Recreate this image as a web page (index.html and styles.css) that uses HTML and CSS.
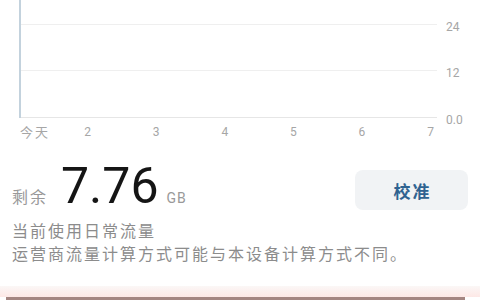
FILE: index.html
```html
<!DOCTYPE html>
<html lang="zh-CN">
<head>
<meta charset="utf-8">
<link rel="stylesheet" href="styles.css">
</head>
<body>
<div class="chart">
  <div class="plot">
    <div class="row r1"></div>
    <div class="row r2"></div>
    <div class="row r3"></div>
    <div class="bar"></div>
  </div>
  <div class="yaxis">
    <div class="yrow r1"><span>24</span></div>
    <div class="yrow r2"><span>12</span></div>
    <div class="yrow r3"><span>0.0</span></div>
  </div>
</div>
<div class="xaxis">
  <span class="xl first">今天</span>
  <span class="xl">2</span>
  <span class="xl">3</span>
  <span class="xl">4</span>
  <span class="xl">5</span>
  <span class="xl">6</span>
  <span class="xl">7</span>
</div>
<div class="info">
  <div class="remain">
    <span class="label">剩余</span>
    <span class="value">7.76</span>
    <span class="unit">GB</span>
  </div>
  <button class="calib">校准</button>
</div>
<div class="notes">
  <p>当前使用日常流量</p>
  <p>运营商流量计算方式可能与本设备计算方式不同。</p>
</div>
<div class="band"></div>
<div class="edge"></div>
</body>
</html>
```
FILE: styles.css
```css
* { box-sizing: border-box; }
html, body { margin: 0; padding: 0; background: #fff; overflow: hidden; }
body {
  width: 480px; height: 300px;
  font-family: "Noto Sans CJK SC", "Noto Sans", sans-serif;
  color: #8c8c8c;
}
.chart { display: flex; padding-left: 19px; }
.plot { position: relative; width: 418px; display: flex; flex-direction: column; }
.row { border-bottom: 1px solid #efefef; }
.r1 { height: 25px; }
.r2 { height: 46px; }
.r3 { height: 47px; }
.plot .r3 { border-bottom-color: #e6e6e6; }
.bar { position: absolute; left: 0; top: 0; width: 2px; height: 118px; background: #c3d2dd; }
.yaxis { display: flex; flex-direction: column; margin-left: 9px; }
.yrow { display: flex; align-items: flex-end; }
.yrow span {
  font-family: Roboto, "Liberation Sans", sans-serif;
  font-size: 12px; line-height: 12px; color: #a6a6a6;
  margin-bottom: -8px;
}
.xaxis { display: flex; padding-left: 19px; margin-top: 7px; }
.xl {
  width: 68.6px; text-align: center;
  font-family: Roboto, "Noto Sans CJK SC", sans-serif;
  font-size: 12px; line-height: 14px; color: #a6a6a6;
}
.xl.first {
  width: 34.3px; text-align: left; padding-left: 1px;
  font-family: "Noto Sans CJK SC", sans-serif; font-size: 13px; letter-spacing: 2px;
}
.info {
  display: flex; justify-content: space-between; align-items: flex-end;
  padding: 0 12px; margin-top: 22px; height: 50px;
}
.remain { display: flex; align-items: baseline; }
.label { font-size: 16px; letter-spacing: 2px; color: #999; }
.value {
  font-family: Roboto, "Liberation Sans", sans-serif;
  font-size: 50px; line-height: 50px; color: #151515;
  margin-left: 13px;
}
.unit {
  font-family: Roboto, "Liberation Sans", sans-serif;
  font-size: 14px; letter-spacing: 1px; color: #999; margin-left: 8px;
}
.calib {
  width: 113px; height: 40px; margin-bottom: 1px;
  border: none; border-radius: 8px; background: #f1f3f5;
  font-family: "Noto Sans CJK SC", sans-serif;
  font-size: 17px; font-weight: bold; letter-spacing: 2px; color: #2f6290;
  padding: 0 0 0 2px;
}
.notes { padding: 0 12px; margin-top: 8px; }
.notes p { margin: 0; font-size: 16px; line-height: 23px; letter-spacing: 2px; color: #8c8c8c; white-space: nowrap; }
.band { margin-top: 21px; height: 11px; background: linear-gradient(#fbf7f6, #fde8e6); }
.edge { height: 3px; margin: 0 15px 0 6px; background: #a48682; }
```
